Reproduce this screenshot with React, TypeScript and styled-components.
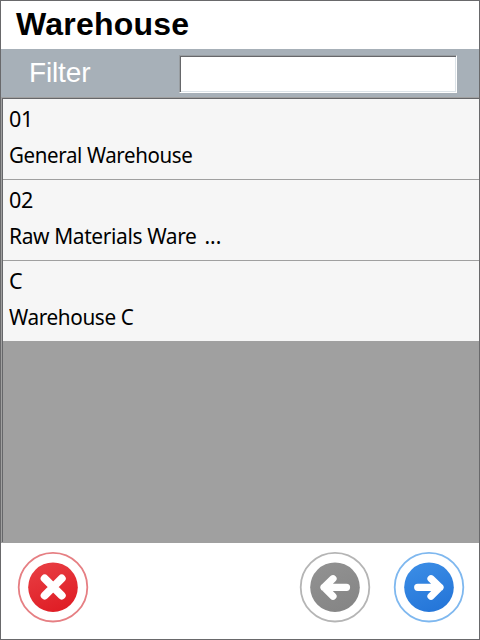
import React from 'react';
import styled, { createGlobalStyle } from 'styled-components';

const GlobalStyle = createGlobalStyle`
  body { margin: 0; background: #fff; }
  *, *::before, *::after { box-sizing: border-box; }
`;

const Screen = styled.main`
  display: flex;
  flex-direction: column;
  width: 480px;
  height: 640px;
  border: 1px solid #69696b;
  background: #fff;
  overflow: hidden;
`;

const Title = styled.h1`
  flex: none;
  height: 48px;
  margin: 0;
  padding-left: 15px;
  font: bold 32px/46px 'Liberation Sans', Arial, sans-serif;
  letter-spacing: 0.22px;
  color: #000;
`;

const FilterBar = styled.div`
  flex: none;
  display: flex;
  align-items: flex-start;
  height: 48px;
  padding: 6px 22px 0 28px;
  background: #a7b0b8;
`;

const FilterLabel = styled.label`
  width: 150px;
  font: 28px/36px 'Liberation Sans', Arial, sans-serif;
  letter-spacing: -0.15px;
  color: #fff;
`;

const FilterInput = styled.input`
  width: 278px;
  height: 38px;
  padding: 0 6px;
  border: 1px solid;
  border-color: #989da1 #fff #fff #989da1;
  border-radius: 0;
  outline: none;
  background: #fff;
  box-shadow: inset 1px 1px #66676a, inset -1px -1px #dce3e8;
  font: 24px 'Liberation Sans', Arial, sans-serif;
`;

const List = styled.ul`
  flex: none;
  height: 446px;
  margin: 0;
  padding: 1px 0 0 1px;
  list-style: none;
  border: solid #a0a0a0;
  border-width: 1px 0 1px 1px;
  box-shadow: inset 1px 1px #66676a;
  background: #a0a0a0;
`;

const Row = styled.li`
  height: 81px;
  padding: 1px 0 0 6px;
  border-bottom: 1px solid #a0a0a0;
  background: #f6f6f6;
  color: #000;
  font: 22px/36px 'Noto Sans', Tahoma, sans-serif;
  letter-spacing: -0.4px;
  white-space: pre;
`;

const Line = styled.div<{ $stretch: number }>`
  transform: scaleX(${(p) => p.$stretch});
  transform-origin: left;
`;

const Ellipsis = styled.span`
  margin-left: 3px;
  letter-spacing: 0;
`;

const Footer = styled.footer`
  flex: 1;
  display: flex;
  align-items: flex-start;
  padding: 9px 14px 0 16px;
`;

const RoundButton = styled.button<{ $push?: boolean }>`
  width: 72px;
  height: 72px;
  margin: 0 0 0 ${(p) => (p.$push ? 'auto' : '0')};
  padding: 0;
  border: 0;
  background: none;

  & + & + & { margin-left: 22px; }
  svg { display: block; }
`;

interface DiscProps {
  id: string;
  ring: string;
  from: string;
  to: string;
  glyph: string;
  width: number;
}

const Disc = ({ id, ring, from, to, glyph, width }: DiscProps) => (
  <svg width="72" height="72" viewBox="0 0 72 72" fill="none">
    <defs>
      <linearGradient id={id} x1="0.3" y1="0" x2="0.7" y2="1">
        <stop stopColor={from} />
        <stop offset="1" stopColor={to} />
      </linearGradient>
    </defs>
    <circle cx="36" cy="35.2" r="34.3" stroke={ring} strokeWidth="1.8" />
    <circle cx="36" cy="35.2" r="24.8" fill={`url(#${id})`} />
    <path d={glyph} stroke="#fff" strokeWidth={width} strokeLinecap="round" strokeLinejoin="round" />
  </svg>
);

const warehouses = [
  { code: '01', name: 'General Warehouse', stretch: 0.932 },
  { code: '02', name: 'Raw Materials Ware ', truncated: true, stretch: 0.952 },
  { code: 'C', name: 'Warehouse C', stretch: 0.942 },
];

export default function App() {
  return (
    <>
      <GlobalStyle />
      <Screen>
        <Title>Warehouse</Title>
        <FilterBar>
          <FilterLabel htmlFor="filter">Filter</FilterLabel>
          <FilterInput id="filter" />
        </FilterBar>
        <List>
          {warehouses.map((w) => (
            <Row key={w.code}>
              <Line $stretch={0.98}>{w.code}</Line>
              <Line $stretch={w.stretch}>
                {w.name}
                {w.truncated && <Ellipsis>...</Ellipsis>}
              </Line>
            </Row>
          ))}
        </List>
        <Footer>
          <RoundButton aria-label="Cancel">
            <Disc id="cancel" ring="#e67f83" from="#e83d42" to="#df1c24" glyph="M27.7 26.5 44.7 43.5M44.7 26.5 27.7 43.5" width={8} />
          </RoundButton>
          <RoundButton aria-label="Back" $push>
            <Disc id="back" ring="#b5b5b5" from="#919191" to="#858585" glyph="M47.5 35.3H25M34 26.7 25 35.3 34 44.3" width={7.2} />
          </RoundButton>
          <RoundButton aria-label="Next">
            <Disc id="next" ring="#7fb8ef" from="#3a8ce5" to="#2475d8" glyph="M24.7 35.3H47M38 26.7 47 35.3 38 44.3" width={7.2} />
          </RoundButton>
        </Footer>
      </Screen>
    </>
  );
}
